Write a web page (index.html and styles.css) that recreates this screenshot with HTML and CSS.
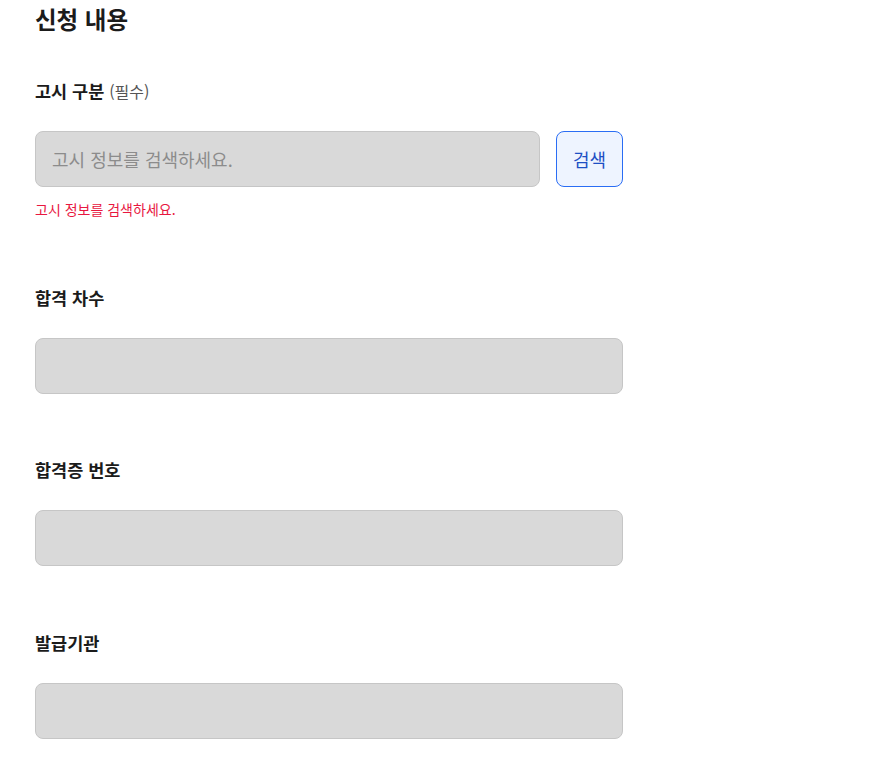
FILE: index.html
```html
<!DOCTYPE html>
<html lang="ko">
<head>
<meta charset="utf-8">
<link rel="stylesheet" href="styles.css">
</head>
<body>
<main class="form">
  <h2 class="title">신청 내용</h2>

  <div class="field field-first">
    <label class="label">고시 구분 <span class="req">(필수)</span></label>
    <div class="row">
      <input class="input input-grow" type="text" placeholder="고시 정보를 검색하세요." disabled>
      <button class="btn" type="button">검색</button>
    </div>
    <p class="error">고시 정보를 검색하세요.</p>
  </div>

  <div class="field field-after-error">
    <label class="label">합격 차수</label>
    <input class="input" type="text" disabled>
  </div>

  <div class="field">
    <label class="label">합격증 번호</label>
    <input class="input" type="text" disabled>
  </div>

  <div class="field field-last">
    <label class="label">발급기관</label>
    <input class="input" type="text" disabled>
  </div>
</main>
</body>
</html>
```

FILE: styles.css
```css
html, body {
  margin: 0;
  padding: 0;
  background: #ffffff;
}
body {
  font-family: "Noto Sans CJK KR", "Noto Sans", sans-serif;
  color: #1b1b1b;
}
.form {
  width: 588px;
  padding: 4px 0 0 35px;
  display: flex;
  flex-direction: column;
}
.title {
  margin: 0;
  font-size: 23.5px;
  line-height: 30px;
  font-weight: 700;
}
.field {
  display: flex;
  flex-direction: column;
  margin-top: 64px;
}
.field-first {
  margin-top: 45px;
}
.field-after-error {
  margin-top: 67px;
}
.field-last {
  margin-top: 65px;
}
.label {
  font-size: 17.5px;
  line-height: 24px;
  font-weight: 700;
  margin-bottom: 28px;
}
.req {
  font-size: 16px;
  font-weight: 400;
  color: #555555;
}
.row {
  display: flex;
  gap: 16px;
}
.input {
  box-sizing: border-box;
  height: 56px;
  width: 100%;
  margin: 0;
  padding: 0 16px;
  background: #d9d9d9;
  border: 1px solid #c6c6c6;
  border-radius: 8px;
  font-family: inherit;
  font-size: 18px;
  color: #1b1b1b;
}
.input::placeholder {
  color: #8c8c8c;
}
.input-grow {
  flex: 1;
  width: auto;
}
.btn {
  box-sizing: border-box;
  width: 67px;
  height: 56px;
  flex: none;
  margin: 0;
  padding: 0;
  background: #eef4ff;
  border: 1px solid #2a6df4;
  border-radius: 8px;
  color: #1d4fc4;
  font-family: inherit;
  font-size: 18px;
}
.error {
  margin: 12px 0 0;
  font-size: 14px;
  line-height: 20px;
  color: #e8173f;
}
```
